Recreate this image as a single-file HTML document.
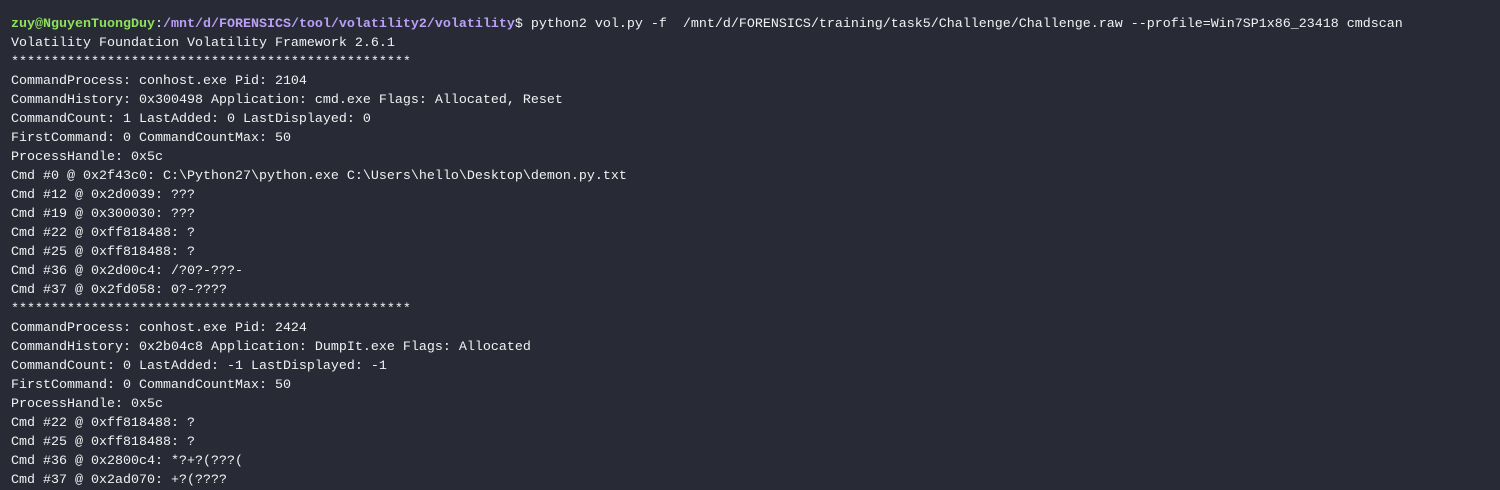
<!DOCTYPE html>
<html><head><meta charset="utf-8"><style>
html,body{margin:0;padding:0;background:#282a36;width:1500px;height:488px;overflow:hidden}
pre{margin:0;position:absolute;left:11px;top:15px;font-family:"Liberation Mono",monospace;font-size:13.33px;line-height:19px;color:#f2f2f2;white-space:pre}
.g{color:#8ee05c;font-weight:bold}.p{color:#b9a0f5;font-weight:bold}
</style></head><body><pre><span class="g">zuy@NguyenTuongDuy</span>:<span class="p">/mnt/d/FORENSICS/tool/volatility2/volatility</span>$ python2 vol.py -f  /mnt/d/FORENSICS/training/task5/Challenge/Challenge.raw --profile=Win7SP1x86_23418 cmdscan
Volatility Foundation Volatility Framework 2.6.1
**************************************************
CommandProcess: conhost.exe Pid: 2104
CommandHistory: 0x300498 Application: cmd.exe Flags: Allocated, Reset
CommandCount: 1 LastAdded: 0 LastDisplayed: 0
FirstCommand: 0 CommandCountMax: 50
ProcessHandle: 0x5c
Cmd #0 @ 0x2f43c0: C:\Python27\python.exe C:\Users\hello\Desktop\demon.py.txt
Cmd #12 @ 0x2d0039: ???
Cmd #19 @ 0x300030: ???
Cmd #22 @ 0xff818488: ?
Cmd #25 @ 0xff818488: ?
Cmd #36 @ 0x2d00c4: /?0?-???-
Cmd #37 @ 0x2fd058: 0?-????
**************************************************
CommandProcess: conhost.exe Pid: 2424
CommandHistory: 0x2b04c8 Application: DumpIt.exe Flags: Allocated
CommandCount: 0 LastAdded: -1 LastDisplayed: -1
FirstCommand: 0 CommandCountMax: 50
ProcessHandle: 0x5c
Cmd #22 @ 0xff818488: ?
Cmd #25 @ 0xff818488: ?
Cmd #36 @ 0x2800c4: *?+?(???(
Cmd #37 @ 0x2ad070: +?(????</pre></body></html>
